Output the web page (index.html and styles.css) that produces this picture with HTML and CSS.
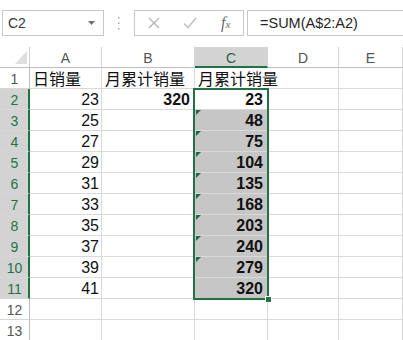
FILE: index.html
```html
<!DOCTYPE html>
<html>
<head>
<meta charset="utf-8">
<link rel="stylesheet" href="styles.css">
</head>
<body>
<div class="app">
  <div class="fbar">
    <div class="namebox">
      <span class="ref">C2</span>
      <svg class="dd" width="7" height="4" viewBox="0 0 7 4"><path d="M0 0H7L3.5 4Z" fill="#6f6f6f"/></svg>
    </div>
    <svg class="grip" width="3" height="13" viewBox="0 0 3 13"><rect x="1" y="0" width="1.5" height="1.5" fill="#a8a8a8"/><rect x="1" y="5.5" width="1.5" height="1.5" fill="#a8a8a8"/><rect x="1" y="11" width="1.5" height="1.5" fill="#a8a8a8"/></svg>
    <div class="fbtns">
      <svg class="ico-x" width="12" height="12" viewBox="0 0 12 12"><path d="M1 1L11 11M11 1L1 11" stroke="#b4b4b4" stroke-width="1.3" fill="none"/></svg>
      <svg class="ico-ok" width="14" height="12" viewBox="0 0 14 12"><path d="M1 6.5L5 10.5L13 1" stroke="#c4c4c4" stroke-width="1.6" fill="none"/></svg>
      <span class="fx"><i>f</i><i class="fxx">x</i></span>
    </div>
    <div class="formula">=SUM(A$2:A2)</div>
  </div>

  <div class="sheet">
    <div class="corner"><span class="tri"></span></div>
    <div class="ch">A</div>
    <div class="ch">B</div>
    <div class="ch sel">C</div>
    <div class="ch">D</div>
    <div class="ch">E</div>

    <div class="rh">1</div>
    <div class="c cn">日销量</div>
    <div class="c cn">月累计销量</div>
    <div class="c cn over">月累计销量</div>
    <div class="c"></div>
    <div class="c"></div>

    <div class="rh sel">2</div>
    <div class="c num">23</div>
    <div class="c num b">320</div>
    <div class="c num b">23</div>
    <div class="c"></div>
    <div class="c"></div>

    <div class="rh sel">3</div>
    <div class="c num">25</div>
    <div class="c"></div>
    <div class="c num b g err">48</div>
    <div class="c"></div>
    <div class="c"></div>

    <div class="rh sel">4</div>
    <div class="c num">27</div>
    <div class="c"></div>
    <div class="c num b g err">75</div>
    <div class="c"></div>
    <div class="c"></div>

    <div class="rh sel">5</div>
    <div class="c num">29</div>
    <div class="c"></div>
    <div class="c num b g err">104</div>
    <div class="c"></div>
    <div class="c"></div>

    <div class="rh sel">6</div>
    <div class="c num">31</div>
    <div class="c"></div>
    <div class="c num b g err">135</div>
    <div class="c"></div>
    <div class="c"></div>

    <div class="rh sel">7</div>
    <div class="c num">33</div>
    <div class="c"></div>
    <div class="c num b g err">168</div>
    <div class="c"></div>
    <div class="c"></div>

    <div class="rh sel">8</div>
    <div class="c num">35</div>
    <div class="c"></div>
    <div class="c num b g err">203</div>
    <div class="c"></div>
    <div class="c"></div>

    <div class="rh sel">9</div>
    <div class="c num">37</div>
    <div class="c"></div>
    <div class="c num b g err">240</div>
    <div class="c"></div>
    <div class="c"></div>

    <div class="rh sel">10</div>
    <div class="c num">39</div>
    <div class="c"></div>
    <div class="c num b g err">279</div>
    <div class="c"></div>
    <div class="c"></div>

    <div class="rh sel">11</div>
    <div class="c num">41</div>
    <div class="c"></div>
    <div class="c num b g">320</div>
    <div class="c"></div>
    <div class="c"></div>

    <div class="rh">12</div>
    <div class="c"></div>
    <div class="c"></div>
    <div class="c"></div>
    <div class="c"></div>
    <div class="c"></div>

    <div class="rh">13</div>
    <div class="c"></div>
    <div class="c"></div>
    <div class="c"></div>
    <div class="c"></div>
    <div class="c"></div>

    <div class="selbox"><span class="handle"></span></div>
  </div>
</div>
</body>
</html>
```

FILE: styles.css
```css
html, body {
  margin: 0;
  padding: 0;
  background: #ffffff;
}
body {
  width: 403px;
  height: 340px;
  overflow: hidden;
  font-family: "Liberation Sans", Arial, sans-serif;
}
.app {
  display: flex;
  flex-direction: column;
}

/* formula bar */
.fbar {
  display: flex;
  align-items: center;
  height: 26px;
  margin-top: 10px;
  padding-left: 2px;
}
.namebox {
  box-sizing: border-box;
  width: 102px;
  height: 26px;
  border: 1px solid #c8c8c8;
  display: flex;
  align-items: center;
  justify-content: space-between;
  padding: 0 8px 0 5px;
}
.ref {
  font-size: 14px;
  color: #3a3a3a;
}
.grip {
  margin-left: 13px;
}
.fbtns {
  box-sizing: border-box;
  margin-left: 14px;
  width: 110px;
  height: 26px;
  border: 1px solid #c8c8c8;
  display: flex;
  align-items: center;
  padding-left: 13px;
}
.ico-ok {
  margin-left: 23px;
}
.fx {
  margin-left: 24px;
  font-family: "Liberation Serif", "Times New Roman", serif;
  font-size: 16px;
  color: #6a6a6a;
}
.fxx {
  font-size: 11px;
}
.formula {
  box-sizing: border-box;
  margin-left: 3px;
  flex: 1;
  height: 26px;
  border: 1px solid #c8c8c8;
  border-right: none;
  padding-left: 12px;
  font-size: 14.5px;
  line-height: 24px;
  color: #262626;
}

/* sheet */
.sheet {
  position: relative;
  margin-top: 11px;
  display: grid;
  grid-template-columns: 30px 72px 93px 73px 71px 1fr;
  grid-auto-rows: 21px;
}
.corner {
  box-sizing: border-box;
  border-right: 1px solid #cfcfcf;
  border-bottom: 1px solid #bdbdbd;
  position: relative;
}
.tri {
  position: absolute;
  right: 2px;
  bottom: 3px;
  width: 0;
  height: 0;
  border-left: 12px solid transparent;
  border-bottom: 13px solid #dedede;
}
.ch {
  box-sizing: border-box;
  border-right: 1px solid #d6d6d6;
  border-bottom: 1px solid #bdbdbd;
  text-align: center;
  font-size: 14px;
  line-height: 22px;
  color: #555555;
}
.ch.sel {
  background: #d3d3d3;
  border-bottom: 2px solid #217346;
  color: #2f5e46;
}
.rh {
  box-sizing: border-box;
  border-right: 1px solid #bdbdbd;
  border-bottom: 1px solid #d6d6d6;
  text-align: center;
  font-size: 14px;
  line-height: 22px;
  color: #555555;
}
.rh.sel {
  background: #d3d3d3;
  border-right: 2px solid #217346;
  color: #217346;
  padding-left: 1px;
}
.c {
  box-sizing: border-box;
  border-right: 1px solid #d9d9d9;
  border-bottom: 1px solid #d9d9d9;
  font-size: 16px;
  color: #111111;
  white-space: nowrap;
  position: relative;
}
.cn {
  font-family: "Noto Sans CJK SC", sans-serif;
  font-size: 16px;
  line-height: 20px;
  padding-left: 3px;
  color: #111111;
}
.over {
  border-right-color: transparent;
}
.num {
  text-align: right;
  padding-right: 2px;
  line-height: 22px;
}
.b {
  font-weight: bold;
  padding-right: 4px;
}
.g {
  background: #c6c6c6;
}
.err::before {
  content: "";
  position: absolute;
  left: 1px;
  top: 0;
  width: 0;
  height: 0;
  border-top: 5px solid #1e6b3f;
  border-right: 5px solid transparent;
}

/* selection overlay */
.selbox {
  position: absolute;
  box-sizing: border-box;
  left: 193px;
  top: 41px;
  width: 76px;
  height: 212px;
  border: 2px solid #217346;
  pointer-events: none;
}
.handle {
  position: absolute;
  right: -5px;
  bottom: -5px;
  width: 5px;
  height: 5px;
  background: #217346;
  border: 1px solid #ffffff;
}
```
